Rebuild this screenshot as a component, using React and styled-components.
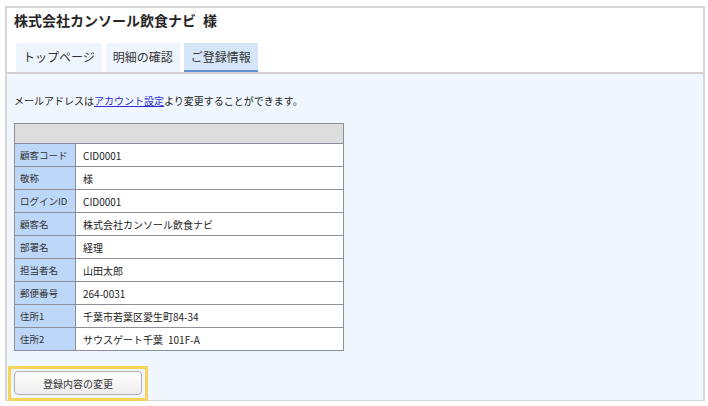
import React from "react";
import styled, { createGlobalStyle } from "styled-components";

const rows = [
  ["顧客コード", "CID0001"],
  ["敬称", "様"],
  ["ログインID", "CID0001"],
  ["顧客名", "株式会社カンソール飲食ナビ"],
  ["部署名", "経理"],
  ["担当者名", "山田太郎"],
  ["郵便番号", "264-0031"],
  ["住所1", "千葉市若葉区愛生町84-34"],
  ["住所2", "サウスゲート千葉\u2002101F-A"],
];

const tabs = ["トップページ", "明細の確認", "ご登録情報"];

const App = () => {
  return (
    <>
      <GlobalStyle />
      <Panel>
        <Header>
          <Title>株式会社カンソール飲食ナビ{"\u2002"}様</Title>
          <Tabs>
            {tabs.map((t, i) => (
              <Tab key={t} $active={i === 2}>
                {t}
              </Tab>
            ))}
          </Tabs>
        </Header>
        <Content>
          <Notice>
            メールアドレスは<a href="#">アカウント設定</a>より変更することができます。
          </Notice>
          <InfoTable>
            <thead>
              <tr>
                <HeadCell colSpan={2} />
              </tr>
            </thead>
            <tbody>
              {rows.map(([label, value]) => (
                <tr key={label}>
                  <Label>{label}</Label>
                  <Value>{value}</Value>
                </tr>
              ))}
            </tbody>
          </InfoTable>
          <FocusRing>
            <EditButton>登録内容の変更</EditButton>
          </FocusRing>
        </Content>
      </Panel>
    </>
  );
};

const GlobalStyle = createGlobalStyle`
  html, body {
    margin: 0;
    background: #ffffff;
  }
  body {
    padding: 6px 3px 0 5px;
    font-family: "Noto Sans CJK JP", "Noto Sans", sans-serif;
    color: #222;
  }
`;

const Panel = styled.div`
  width: 700px;
  height: 395px;
  box-sizing: border-box;
  border: 2px solid #d6d6d6;
  border-bottom-width: 1px;
  display: flex;
  flex-direction: column;
  background: #eff6fe;
`;

const Header = styled.div`
  background: #ffffff;
  border-bottom: 2px solid #d0d0d0;
  padding: 1px 0 0 7px;
`;

const Title = styled.div`
  font-size: 14px;
  font-weight: 700;
  line-height: 22px;
  color: #262626;
`;

const Tabs = styled.div`
  display: flex;
  gap: 4px;
  margin: 12px 0 0 2px;
`;

const Tab = styled.div`
  height: 27px;
  padding: 0 7px;
  display: flex;
  align-items: center;
  font-size: 12px;
  color: #333;
  background: ${(p) => (p.$active ? "#d6e6f9" : "#eef5fd")};
  border-bottom: 2px solid ${(p) => (p.$active ? "#5d8fd5" : "transparent")};
`;

const Content = styled.div`
  flex: 1;
  padding: 20px 7px 0 7px;
`;

const Notice = styled.p`
  margin: 0 0 15px;
  font-size: 10px;
  line-height: 14px;
  color: #222;

  a {
    color: #2b2bd0;
    text-decoration: underline;
  }
`;

const InfoTable = styled.table`
  width: 330px;
  border-collapse: collapse;
  border: 1px solid #8e8e98;
  background: #ffffff;
`;

const HeadCell = styled.th`
  height: 19px;
  padding: 0;
  background: #dddddd;
  border: 1px solid #8e8e98;
`;

const Label = styled.td`
  width: 61px;
  height: 22px;
  padding: 0 0 0 5px;
  box-sizing: border-box;
  background: #bcd7f7;
  border: 1px solid #8e8e98;
  font-size: 9.5px;
  color: #333;
  white-space: nowrap;
`;

const Value = styled.td`
  height: 22px;
  padding: 0 0 0 7px;
  border: 1px solid #8e8e98;
  font-size: 10px;
  color: #222;
  white-space: pre;
`;

const FocusRing = styled.div`
  position: relative;
  display: inline-block;
  margin: 15px 0 0 -6px;
  padding: 2px 3px 3px;
  border: 3px solid #f5d35c;
`;

const EditButton = styled.button`
  display: block;
  width: 128px;
  height: 24px;
  border: 1px solid #b0b0b0;
  border-radius: 4px;
  background: linear-gradient(#ffffff, #ededed);
  font-family: inherit;
  font-size: 10px;
  color: #333;
  outline: none;
`;

export default App;
